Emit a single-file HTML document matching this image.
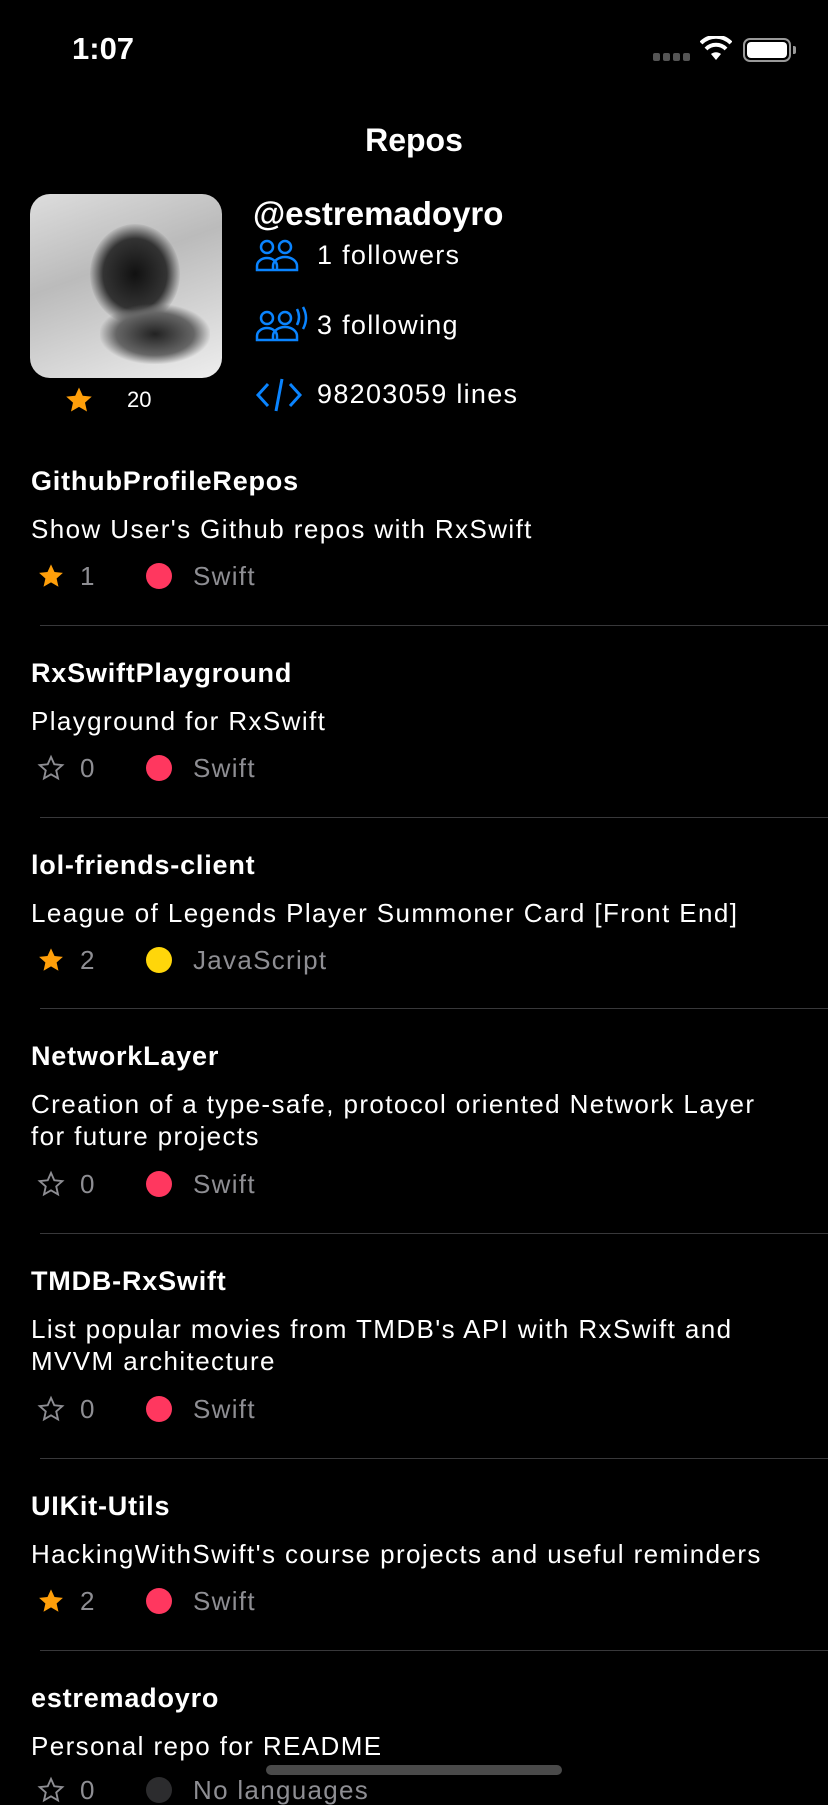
<!DOCTYPE html>
<html><head><meta charset="utf-8">
<style>
*{margin:0;padding:0;box-sizing:border-box}
body{width:828px;height:1792px;background:#000;color:#fff;font-family:"Liberation Sans",sans-serif;position:relative;overflow:hidden}
.a{position:absolute;white-space:nowrap}
.t{font-weight:bold;font-size:27px;letter-spacing:0.8px;left:31px;height:30px;line-height:30px}
.d{font-size:26px;letter-spacing:1.4px;left:31px;line-height:32px}
.n{font-size:26px;color:#8e8e93;left:80px;height:30px;line-height:30px}
.l{font-size:26px;letter-spacing:1.3px;color:#8e8e93;left:193px;height:30px;line-height:30px}
.dot{position:absolute;width:26px;height:26px;border-radius:50%;left:146px}
.sep{position:absolute;left:40px;right:0;height:1px;background:#38383a}
.st{position:absolute;left:37px;width:28px;height:28px}
.s{font-size:27px;letter-spacing:1.3px;line-height:30px}
</style></head><body>
<div class="a" style="left:72px;top:31px;font-size:31px;font-weight:bold;line-height:36px">1:07</div>
<div class="a" style="left:653px;top:53px;width:40px;height:8px">
<div style="position:absolute;left:0;width:7px;height:8px;background:#555;border-radius:2px"></div>
<div style="position:absolute;left:10px;width:7px;height:8px;background:#555;border-radius:2px"></div>
<div style="position:absolute;left:20px;width:7px;height:8px;background:#555;border-radius:2px"></div>
<div style="position:absolute;left:30px;width:7px;height:8px;background:#555;border-radius:2px"></div>
</div>
<svg class="a" style="left:700px;top:36px" width="32" height="26" viewBox="0 0 32 26"><path d="M16 24 L11 18 A8 8 0 0 1 21 18 Z" fill="#fff"/><path d="M6 13 A14 14 0 0 1 26 13" stroke="#fff" stroke-width="4" fill="none"/><path d="M1 7 A21 21 0 0 1 31 7" stroke="#fff" stroke-width="4" fill="none"/></svg>
<div class="a" style="left:743px;top:38px;width:48px;height:24px;border:2px solid #999;border-radius:7px;padding:2px"><div style="width:100%;height:100%;background:#fff;border-radius:4px"></div></div>
<div class="a" style="left:793px;top:46px;width:3px;height:8px;background:#999;border-radius:0 2px 2px 0"></div>

<div class="a" style="left:0;width:828px;text-align:center;top:122px;font-size:32px;font-weight:bold;line-height:36px">Repos</div>

<div class="a" style="left:30px;top:194px;width:192px;height:184px;border-radius:20px;overflow:hidden;background:linear-gradient(160deg,#ddd,#bbb 40%,#eee 100%)">
<div style="position:absolute;left:60px;top:30px;width:90px;height:100px;border-radius:50%;background:radial-gradient(#111,#333 50%,transparent 72%)"></div>
<div style="position:absolute;left:70px;top:110px;width:110px;height:60px;background:radial-gradient(#222,#666 50%,transparent 72%)"></div>
</div>
<svg class="a" style="left:64px;top:385px" width="30" height="30" viewBox="0 0 24 24"><path d="M12 2l3 6.6 7.2.7-5.4 4.8 1.6 7.1L12 17.5 5.6 21.2l1.6-7.1L1.8 9.3 9 8.6z" fill="#ff9f0a"/></svg>
<div class="a" style="left:127px;top:386px;font-size:22px;line-height:28px">20</div>

<div class="a" style="left:253px;top:196px;font-size:33px;font-weight:bold;line-height:36px">@estremadoyro</div>
<svg class="a" style="left:255px;top:238px" width="48" height="34" viewBox="0 0 48 34" fill="none" stroke="#0a84ff" stroke-width="2.5"><circle cx="12" cy="9" r="6"/><circle cx="30" cy="9" r="6"/><path d="M2 32 v-4 a10 8 0 0 1 20 0 v4 z M18 32 v-4 a12 9 0 0 1 24 0 v4 z"/></svg>
<div class="a s" style="left:317px;top:240px">1 followers</div>
<svg class="a" style="left:255px;top:306px" width="58" height="36" viewBox="0 0 58 36" fill="none" stroke="#0a84ff" stroke-width="2.5"><circle cx="12" cy="12" r="6"/><circle cx="30" cy="12" r="6"/><path d="M2 34 v-4 a10 8 0 0 1 20 0 v4 z M18 34 v-4 a12 9 0 0 1 24 0 v4 z"/><path d="M42 3 q4 8 0 16 M48 1 q6 11 0 22"/></svg>
<div class="a s" style="left:317px;top:310px">3 following</div>
<svg class="a" style="left:255px;top:377px" width="48" height="36" viewBox="0 0 48 36" fill="none" stroke="#0a84ff" stroke-width="3"><path d="M13 7 L3 18 L13 29 M35 7 L45 18 L35 29 M27 2 L21 34"/></svg>
<div class="a s" style="left:317px;top:379px">98203059 lines</div>

<!-- repo1 -->
<div class="a t" style="top:466px">GithubProfileRepos</div>
<div class="a d" style="top:513px">Show User's Github repos with RxSwift</div>
<svg class="st" style="top:562px" viewBox="0 0 24 24"><path d="M12 2l3 6.6 7.2.7-5.4 4.8 1.6 7.1L12 17.5 5.6 21.2l1.6-7.1L1.8 9.3 9 8.6z" fill="#ff9f0a"/></svg>
<div class="a n" style="top:561px">1</div><div class="dot" style="top:563px;background:#ff375f"></div><div class="a l" style="top:561px">Swift</div>
<div class="sep" style="top:625px"></div>
<!-- repo2 -->
<div class="a t" style="top:658px">RxSwiftPlayground</div>
<div class="a d" style="top:705px">Playground for RxSwift</div>
<svg class="st" style="top:754px" viewBox="0 0 24 24"><path d="M12 2.5l2.8 6.3 6.9.7-5.2 4.6 1.5 6.8L12 17.4 6 20.9l1.5-6.8L2.3 9.5l6.9-.7z" fill="none" stroke="#8e8e93" stroke-width="1.6"/></svg>
<div class="a n" style="top:753px">0</div><div class="dot" style="top:755px;background:#ff375f"></div><div class="a l" style="top:753px">Swift</div>
<div class="sep" style="top:817px"></div>
<!-- repo3 -->
<div class="a t" style="top:850px">lol-friends-client</div>
<div class="a d" style="top:897px">League of Legends Player Summoner Card [Front End]</div>
<svg class="st" style="top:946px" viewBox="0 0 24 24"><path d="M12 2l3 6.6 7.2.7-5.4 4.8 1.6 7.1L12 17.5 5.6 21.2l1.6-7.1L1.8 9.3 9 8.6z" fill="#ff9f0a"/></svg>
<div class="a n" style="top:945px">2</div><div class="dot" style="top:947px;background:#ffd60a"></div><div class="a l" style="top:945px">JavaScript</div>
<div class="sep" style="top:1008px"></div>
<!-- repo4 -->
<div class="a t" style="top:1041px">NetworkLayer</div>
<div class="a d" style="top:1088px">Creation of a type-safe, protocol oriented Network Layer<br>for future projects</div>
<svg class="st" style="top:1170px" viewBox="0 0 24 24"><path d="M12 2.5l2.8 6.3 6.9.7-5.2 4.6 1.5 6.8L12 17.4 6 20.9l1.5-6.8L2.3 9.5l6.9-.7z" fill="none" stroke="#8e8e93" stroke-width="1.6"/></svg>
<div class="a n" style="top:1169px">0</div><div class="dot" style="top:1171px;background:#ff375f"></div><div class="a l" style="top:1169px">Swift</div>
<div class="sep" style="top:1233px"></div>
<!-- repo5 -->
<div class="a t" style="top:1266px">TMDB-RxSwift</div>
<div class="a d" style="top:1313px">List popular movies from TMDB's API with RxSwift and<br>MVVM architecture</div>
<svg class="st" style="top:1395px" viewBox="0 0 24 24"><path d="M12 2.5l2.8 6.3 6.9.7-5.2 4.6 1.5 6.8L12 17.4 6 20.9l1.5-6.8L2.3 9.5l6.9-.7z" fill="none" stroke="#8e8e93" stroke-width="1.6"/></svg>
<div class="a n" style="top:1394px">0</div><div class="dot" style="top:1396px;background:#ff375f"></div><div class="a l" style="top:1394px">Swift</div>
<div class="sep" style="top:1458px"></div>
<!-- repo6 -->
<div class="a t" style="top:1491px">UIKit-Utils</div>
<div class="a d" style="top:1538px">HackingWithSwift's course projects and useful reminders</div>
<svg class="st" style="top:1587px" viewBox="0 0 24 24"><path d="M12 2l3 6.6 7.2.7-5.4 4.8 1.6 7.1L12 17.5 5.6 21.2l1.6-7.1L1.8 9.3 9 8.6z" fill="#ff9f0a"/></svg>
<div class="a n" style="top:1586px">2</div><div class="dot" style="top:1588px;background:#ff375f"></div><div class="a l" style="top:1586px">Swift</div>
<div class="sep" style="top:1650px"></div>
<!-- repo7 -->
<div class="a t" style="top:1683px">estremadoyro</div>
<div class="a d" style="top:1730px">Personal repo for README</div>
<svg class="st" style="top:1776px" viewBox="0 0 24 24"><path d="M12 2.5l2.8 6.3 6.9.7-5.2 4.6 1.5 6.8L12 17.4 6 20.9l1.5-6.8L2.3 9.5l6.9-.7z" fill="none" stroke="#8e8e93" stroke-width="1.6"/></svg>
<div class="a n" style="top:1775px">0</div><div class="dot" style="top:1777px;background:#2c2c2e"></div><div class="a l" style="top:1775px">No languages</div>

<div class="a" style="left:266px;top:1765px;width:296px;height:10px;border-radius:5px;background:#4a4a4a"></div>
</body></html>
